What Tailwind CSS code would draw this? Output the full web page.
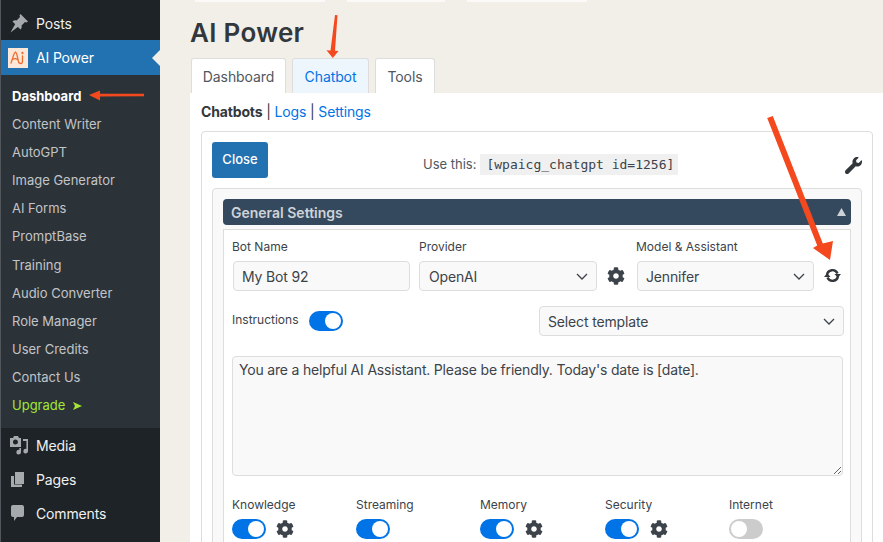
<!DOCTYPE html>
<html>
<head>
<meta charset="utf-8">
<script src="https://cdn.jsdelivr.net/npm/@tailwindcss/browser@4"></script>
</head>
<body class="m-0 overflow-hidden">
<div class="relative flex w-[883px] h-[542px] overflow-hidden bg-[#f1efe8] font-[Inter,sans-serif] text-[#3c434a]">

  <!-- Sidebar -->
  <aside class="w-[160px] h-full shrink-0 bg-[#1d2327] border-l border-[#50565b] text-[14px] tracking-[-0.15px] text-[#f0f0f1] pt-[6px]">
    <div class="flex items-center h-[34px] pl-[8px] gap-[7px]">
      <svg class="w-[20px] h-[20px]" viewBox="0 0 20 20" fill="#a7aaad"><path d="M11.500 1L19 8.500l-1.500 1-1.500-.5-3.500 3.500c.5 1.500 0 3-1 4L3.500 8.500c1-1 2.500-1.500 4-1L11 4l-.5-1.500z"/><path d="M6.500 10.500l3 3L1.500 19.500z"/></svg>
      <span>Posts</span>
    </div>
    <div class="relative flex items-center h-[35px] pl-[7px] gap-[8px] bg-[#2271b1] text-white">
      <div class="w-[20px] h-[20px] bg-[#fde7d9] flex items-center justify-center">
        <svg class="w-[16px] h-[15px]" viewBox="0 0 16 15" fill="none" stroke="#ee6a2c" stroke-width="1.300" stroke-linecap="round"><path d="M1 13C2.500 10 3.500 3 5.500 2 7.500 3 7.500 10 9 13"/><path d="M2.500 9.500C4 8.500 6 8.500 7.500 9.500"/><path d="M12.500 6v5.500c0 2-1.500 2.500-3 1.500"/><circle cx="12.500" cy="3" r=".5"/></svg>
      </div>
      <span>AI Power</span>
      <div class="absolute right-0 top-[10px] w-0 h-0 border-y-[8px] border-y-transparent border-r-[8px] border-r-[#f1efe8]"></div>
    </div>
    <nav class="h-[353px] bg-[#2c3338] pt-[7px] text-[13px] tracking-normal text-[#c3c4c7] pl-[11px] flex flex-col">
      <a class="h-[28.1px] leading-[28px] font-bold text-white">Dashboard</a>
      <a class="h-[28.1px] leading-[28px]">Content Writer</a>
      <a class="h-[28.1px] leading-[28px]">AutoGPT</a>
      <a class="h-[28.1px] leading-[28px]">Image Generator</a>
      <a class="h-[28.1px] leading-[28px]">AI Forms</a>
      <a class="h-[28.1px] leading-[29px]">PromptBase</a>
      <a class="h-[28.1px] leading-[29px]">Training</a>
      <a class="h-[28.1px] leading-[29px]">Audio Converter</a>
      <a class="h-[28.1px] leading-[29px]">Role Manager</a>
      <a class="h-[28.1px] leading-[29px]">User Credits</a>
      <a class="h-[28.1px] leading-[29px]">Contact Us</a>
      <a class="h-[28.1px] mt-[1px] text-[#a3e635] flex items-center gap-[8px]">Upgrade
        <svg class="w-[9px] h-[8px]" viewBox="0 0 9 8" fill="#a3e635"><path d="M0 0l9 4-9 4 2-4z"/></svg>
      </a>
    </nav>
    <div class="flex items-center h-[34px] pl-[8px] gap-[7px]">
      <svg class="w-[20px] h-[20px]" viewBox="0 0 20 20" fill="#a7aaad"><path fill-rule="evenodd" d="M1 3h3l1-2h4l1 2h2v9H1zm5.500 1.500a2.500 2.500 0 100 5 2.500 2.500 0 000-5z"/><path d="M14 4h5v12a2.300 2.300 0 11-1.600-2.100V6H14z"/><path d="M12 13v4a2.300 2.300 0 11-1.600-2.100V13z"/></svg>
      <span>Media</span>
    </div>
    <div class="flex items-center h-[34px] pl-[8px] gap-[7px]">
      <svg class="w-[20px] h-[20px]" viewBox="0 0 20 20" fill="#a7aaad"><path d="M6 3h9v12H6z"/><path d="M2 7h3v8.500h8V18H2z"/></svg>
      <span>Pages</span>
    </div>
    <div class="flex items-center h-[34px] pl-[8px] gap-[7px]">
      <svg class="w-[20px] h-[20px]" viewBox="0 0 20 20" fill="#a7aaad"><path d="M4 2h9a2 2 0 012 2v8a2 2 0 01-2 2H8l-3 4v-4H4a2 2 0 01-2-2V4a2 2 0 012-2z"/></svg>
      <span>Comments</span>
    </div>
  </aside>

  <!-- Main -->
  <main class="flex-1 min-w-0 pl-[30px]">
    <div class="flex h-[2px] pl-[5px] gap-[22px]">
      <div class="w-[130px] bg-white/70"></div>
      <div class="w-[98px] bg-white/70"></div>
      <div class="w-[120px] bg-white/70"></div>
    </div>
    <h1 class="mt-[15px] text-[26px] leading-[32px] tracking-[0.3px] font-semibold text-[#32373c]">AI Power</h1>

    <div class="flex items-end h-[35px] mt-[9px] pl-px gap-[6px] text-[14px] tracking-[-0.1px]">
      <div class="w-[95px] h-[35px] flex items-center justify-center bg-white border border-b-0 border-[#ddd] rounded-t-[3px] text-[#50575e]">Dashboard</div>
      <div class="w-[77px] h-[35px] flex items-center justify-center bg-[#eef6fd] border border-b-0 border-[#ddd] rounded-t-[3px] text-[#0073e6]">Chatbot</div>
      <div class="w-[60px] h-[35px] flex items-center justify-center bg-white border border-b-0 border-[#ddd] rounded-t-[3px] text-[#50575e]">Tools</div>
    </div>

    <section class="bg-white h-[460px] pl-[11px] pr-[10px] text-[13px]">
      <p class="h-[38px] pt-[10px] leading-[18px] text-[14px] tracking-[-0.15px] text-[#32373c]"><b class="font-bold">Chatbots</b> | <a class="text-[#0073e6]">Logs</a> | <a class="text-[#0073e6]">Settings</a></p>

      <div class="border border-[#ddd] rounded-[4px] p-[10px] h-[440px]">
        <div class="flex items-center h-[36px] relative">
          <button class="w-[56px] h-[36px] bg-[#2271b1] text-white rounded-[3px] text-[13px] font-medium">Close</button>
          <span class="ml-[155px] mt-[10px] text-[#50575e] text-[13px]">Use this:</span>
          <code class="ml-[4px] mt-[9px] h-[21px] w-[198px] px-[6px] bg-[#f0f0f0] leading-[21px] text-[13px] font-['DejaVu_Sans_Mono',monospace] text-[#3c434a] whitespace-nowrap overflow-hidden">[wpaicg_chatgpt id=1256]</code>
          <svg class="ml-auto mt-[11px] w-[17px] h-[17px]" viewBox="0 0 512 512" fill="#32373c"><path d="M507.730 109.100c-2.240-9.030-13.540-12.090-20.120-5.510l-74.360 74.360-67.880-11.310-11.310-67.880 74.360-74.360c6.620-6.620 3.430-17.900-5.660-20.160-47.380-11.740-99.550.91-136.580 37.930-39.640 39.640-50.550 97.100-34.050 147.200L18.740 402.760c-24.990 24.990-24.990 65.510 0 90.500 24.990 24.990 65.510 24.990 90.500 0l213.210-213.210c50.120 16.710 107.470 5.680 147.370-34.220 37.070-37.070 49.700-89.320 37.910-136.730z"/></svg>
        </div>

        <div class="mt-[10px] border border-[#ddd] rounded-[4px] bg-[#f9f9f9] p-[10px] h-[400px]">
          <div class="flex items-center justify-between h-[26px] pl-[8px] pr-[5px] bg-[#34495e] rounded-[4px] text-[14px] font-semibold text-[#ced3d8]">
            <span>General Settings</span>
            <svg class="w-[9px] h-[8px]" viewBox="0 0 9 8" fill="#ced3d8"><path d="M4.500 0L9 8H0z"/></svg>
          </div>
          <div class="mt-[4px] bg-white border border-[#ddd] h-[340px] pl-[8px] pr-[6px] text-[12px]">
            <div class="flex pt-[9px]">
              <div class="w-[187px]">
                <div class="h-[16px] leading-[16px]">Bot Name</div>
                <div class="mt-[6px] ml-px w-[177px] h-[30px] flex items-center pl-[8px] bg-[#f9f9f9] border border-[#ddd] rounded-[4px] text-[14px] tracking-[-0.15px]">My Bot 92</div>
              </div>
              <div class="w-[217px]">
                <div class="h-[16px] leading-[16px]">Provider</div>
                <div class="mt-[6px] flex items-center">
                  <div class="w-[178px] h-[30px] flex items-center justify-between pl-[9px] pr-[8px] bg-[#f9f9f9] border border-[#ddd] rounded-[4px] text-[14px] tracking-[-0.15px]">OpenAI
                    <svg class="w-[12px] h-[7px]" viewBox="0 0 12 7" fill="none" stroke="#3c434a" stroke-width="1.300"><path d="M1 1l5 5 5-5"/></svg>
                  </div>
                  <svg class="ml-[10px] w-[18px] h-[18px]" viewBox="0 0 512 512" fill="#3c434a"><path d="M487.400 315.700l-42.600-24.600c4.300-23.200 4.300-47 0-70.200l42.600-24.600c4.900-2.800 7.100-8.600 5.500-14-11.100-35.600-30-67.800-54.700-94.600-3.800-4.100-10-5.100-14.800-2.300L380.800 110c-17.900-15.400-38.500-27.300-60.800-35.100V25.800c0-5.600-3.900-10.500-9.400-11.700-36.700-8.200-74.300-7.800-109.200 0-5.500 1.200-9.400 6.100-9.400 11.700V75c-22.200 7.900-42.800 19.800-60.800 35.100L88.700 85.500c-4.900-2.800-11-1.900-14.800 2.300-24.700 26.700-43.600 58.900-54.700 94.600-1.700 5.400.6 11.200 5.500 14L67.300 221c-4.300 23.200-4.300 47 0 70.200l-42.600 24.600c-4.900 2.800-7.100 8.600-5.500 14 11.100 35.600 30 67.800 54.700 94.600 3.800 4.100 10 5.100 14.800 2.300l42.600-24.600c17.900 15.400 38.500 27.300 60.800 35.100v49.200c0 5.600 3.900 10.500 9.400 11.700 36.700 8.200 74.300 7.800 109.200 0 5.500-1.200 9.400-6.100 9.400-11.700v-49.200c22.200-7.900 42.800-19.800 60.800-35.100l42.600 24.600c4.900 2.800 11 1.900 14.800-2.300 24.700-26.700 43.600-58.900 54.700-94.600 1.500-5.500-.7-11.300-5.600-14.100zM256 336c-44.100 0-80-35.900-80-80s35.900-80 80-80 80 35.900 80 80-35.900 80-80 80z"/></svg>
                </div>
              </div>
              <div>
                <div class="h-[16px] leading-[16px]">Model &amp; Assistant</div>
                <div class="mt-[6px] flex items-center">
                  <div class="ml-px w-[177px] h-[30px] flex items-center justify-between pl-[8px] pr-[8px] bg-[#f9f9f9] border border-[#ddd] rounded-[4px] text-[14px] tracking-[-0.15px]">Jennifer
                    <svg class="w-[12px] h-[7px]" viewBox="0 0 12 7" fill="none" stroke="#3c434a" stroke-width="1.300"><path d="M1 1l5 5 5-5"/></svg>
                  </div>
                  <svg class="ml-[10px] mt-[-2px] w-[17px] h-[15px]" viewBox="0 0 17 15" fill="none" stroke="#32373c" stroke-width="2.400"><path d="M3 7A5.500 5.500 0 0 1 13.500 5.500"/><path d="M14 8A5.500 5.500 0 0 1 3.500 9.500"/><path d="M10.500 6h6.500l-3.200 3.800z" fill="#32373c" stroke="none"/><path d="M0 9h6.500L3.200 5.200z" fill="#32373c" stroke="none"/></svg>
                </div>
              </div>
            </div>

            <div class="flex items-center justify-between mt-[15px] h-[30px]">
              <div class="flex items-center gap-[10px]">
                <span class="mt-[-2px]">Instructions</span>
                <div class="flex justify-end items-center w-[34px] h-[20px] rounded-full bg-[#0073e6] pr-[2px]"><div class="w-[16px] h-[16px] rounded-full bg-white"></div></div>
              </div>
              <div class="w-[305px] h-[30px] flex items-center justify-between pl-[8px] pr-[8px] bg-[#f9f9f9] border border-[#ddd] rounded-[4px] text-[14px] tracking-[-0.15px]">Select template
                <svg class="w-[12px] h-[7px]" viewBox="0 0 12 7" fill="none" stroke="#3c434a" stroke-width="1.300"><path d="M1 1l5 5 5-5"/></svg>
              </div>
            </div>

            <textarea class="block mt-[20px] w-[611px] h-[120px] p-[6px] bg-[#f9f9f9] border border-[#ddd] rounded-[4px] text-[14px] tracking-[-0.19px] leading-[14px] text-[#3c434a]">You are a helpful AI Assistant. Please be friendly. Today's date is [date].</textarea>

            <div class="grid grid-cols-[124px_124px_125px_124px_1fr] mt-[21px]">
              <div>
                <div class="h-[16px] leading-[16px]">Knowledge</div>
                <div class="mt-[6px] flex items-center gap-[10px]">
                  <div class="flex justify-end items-center w-[34px] h-[20px] rounded-full bg-[#0073e6] pr-[2px]"><div class="w-[16px] h-[16px] rounded-full bg-white"></div></div>
                  <svg class="w-[18px] h-[18px]" viewBox="0 0 512 512" fill="#3c434a"><path d="M487.400 315.700l-42.600-24.600c4.300-23.200 4.300-47 0-70.200l42.600-24.600c4.900-2.800 7.100-8.600 5.500-14-11.100-35.600-30-67.800-54.700-94.600-3.800-4.100-10-5.100-14.800-2.300L380.800 110c-17.900-15.400-38.500-27.300-60.800-35.100V25.800c0-5.600-3.900-10.500-9.400-11.700-36.700-8.200-74.300-7.800-109.200 0-5.500 1.200-9.400 6.100-9.400 11.700V75c-22.200 7.900-42.800 19.800-60.800 35.100L88.700 85.500c-4.900-2.800-11-1.900-14.800 2.300-24.700 26.700-43.600 58.900-54.700 94.600-1.700 5.400.6 11.200 5.500 14L67.300 221c-4.300 23.200-4.300 47 0 70.200l-42.600 24.600c-4.900 2.800-7.100 8.600-5.500 14 11.100 35.600 30 67.800 54.700 94.600 3.800 4.100 10 5.100 14.800 2.300l42.600-24.600c17.900 15.400 38.500 27.300 60.800 35.100v49.200c0 5.600 3.900 10.500 9.400 11.700 36.700 8.200 74.300 7.800 109.200 0 5.500-1.200 9.400-6.100 9.400-11.700v-49.200c22.200-7.900 42.800-19.800 60.800-35.100l42.600 24.600c4.900 2.800 11 1.900 14.800-2.300 24.700-26.700 43.600-58.900 54.700-94.600 1.500-5.500-.7-11.300-5.600-14.100zM256 336c-44.100 0-80-35.900-80-80s35.900-80 80-80 80 35.900 80 80-35.900 80-80 80z"/></svg>
                </div>
              </div>
              <div>
                <div class="h-[16px] leading-[16px]">Streaming</div>
                <div class="mt-[6px] flex justify-end items-center w-[34px] h-[20px] rounded-full bg-[#0073e6] pr-[2px]"><div class="w-[16px] h-[16px] rounded-full bg-white"></div></div>
              </div>
              <div>
                <div class="h-[16px] leading-[16px]">Memory</div>
                <div class="mt-[6px] flex items-center gap-[11px]">
                  <div class="flex justify-end items-center w-[34px] h-[20px] rounded-full bg-[#0073e6] pr-[2px]"><div class="w-[16px] h-[16px] rounded-full bg-white"></div></div>
                  <svg class="w-[18px] h-[18px]" viewBox="0 0 512 512" fill="#3c434a"><path d="M487.400 315.700l-42.600-24.600c4.300-23.200 4.300-47 0-70.200l42.600-24.600c4.900-2.800 7.100-8.600 5.500-14-11.100-35.600-30-67.800-54.700-94.600-3.800-4.100-10-5.100-14.800-2.300L380.800 110c-17.900-15.400-38.500-27.300-60.800-35.100V25.800c0-5.600-3.900-10.500-9.400-11.700-36.700-8.200-74.300-7.800-109.200 0-5.500 1.200-9.400 6.100-9.400 11.700V75c-22.200 7.900-42.800 19.800-60.800 35.100L88.700 85.500c-4.900-2.800-11-1.900-14.800 2.300-24.700 26.700-43.600 58.900-54.700 94.600-1.700 5.400.6 11.200 5.500 14L67.300 221c-4.300 23.200-4.300 47 0 70.200l-42.600 24.600c-4.900 2.800-7.100 8.600-5.500 14 11.100 35.600 30 67.800 54.700 94.600 3.800 4.100 10 5.100 14.800 2.300l42.600-24.600c17.900 15.400 38.500 27.300 60.800 35.100v49.200c0 5.600 3.900 10.500 9.400 11.700 36.700 8.200 74.300 7.800 109.200 0 5.500-1.200 9.400-6.100 9.400-11.700v-49.200c22.200-7.900 42.800-19.800 60.800-35.100l42.600 24.600c4.900 2.800 11 1.900 14.800-2.300 24.700-26.700 43.600-58.900 54.700-94.600 1.500-5.500-.7-11.300-5.600-14.100zM256 336c-44.100 0-80-35.900-80-80s35.900-80 80-80 80 35.900 80 80-35.900 80-80 80z"/></svg>
                </div>
              </div>
              <div>
                <div class="h-[16px] leading-[16px]">Security</div>
                <div class="mt-[6px] flex items-center gap-[11px]">
                  <div class="flex justify-end items-center w-[34px] h-[20px] rounded-full bg-[#0073e6] pr-[2px]"><div class="w-[16px] h-[16px] rounded-full bg-white"></div></div>
                  <svg class="w-[18px] h-[18px]" viewBox="0 0 512 512" fill="#3c434a"><path d="M487.400 315.700l-42.600-24.600c4.300-23.200 4.300-47 0-70.200l42.600-24.600c4.900-2.800 7.100-8.600 5.500-14-11.100-35.600-30-67.800-54.700-94.600-3.800-4.100-10-5.100-14.800-2.300L380.800 110c-17.900-15.400-38.500-27.300-60.800-35.100V25.800c0-5.600-3.900-10.500-9.400-11.700-36.700-8.200-74.300-7.800-109.200 0-5.500 1.200-9.400 6.100-9.400 11.700V75c-22.200 7.900-42.800 19.800-60.800 35.100L88.700 85.500c-4.900-2.800-11-1.900-14.800 2.300-24.700 26.700-43.600 58.900-54.700 94.600-1.700 5.400.6 11.200 5.500 14L67.300 221c-4.300 23.200-4.300 47 0 70.200l-42.600 24.600c-4.900 2.800-7.100 8.600-5.500 14 11.100 35.600 30 67.800 54.700 94.600 3.800 4.100 10 5.100 14.800 2.300l42.600-24.600c17.900 15.400 38.500 27.300 60.800 35.100v49.200c0 5.600 3.900 10.500 9.400 11.700 36.700 8.200 74.300 7.800 109.200 0 5.500-1.200 9.400-6.100 9.400-11.700v-49.200c22.200-7.900 42.800-19.800 60.800-35.100l42.600 24.600c4.900 2.800 11 1.900 14.800-2.300 24.700-26.700 43.600-58.900 54.700-94.600 1.500-5.500-.7-11.300-5.600-14.100zM256 336c-44.100 0-80-35.900-80-80s35.900-80 80-80 80 35.900 80 80-35.900 80-80 80z"/></svg>
                </div>
              </div>
              <div>
                <div class="h-[16px] leading-[16px]">Internet</div>
                <div class="mt-[6px] flex items-center w-[34px] h-[20px] rounded-full bg-[#ccc] pl-[2px]"><div class="w-[16px] h-[16px] rounded-full bg-white"></div></div>
              </div>
            </div>
          </div>
        </div>
      </div>
    </section>
  </main>

  <!-- Annotation arrows -->
  <svg class="absolute inset-0 pointer-events-none" width="883" height="542" viewBox="0 0 883 542" fill="#f4491f" stroke="none">
    <path d="M144 93.800V96.300L100 96.500V100.500L89 95 100 90.500V93.800z"/>
    <path d="M335 15l2.500.2-2.500 35.500 3.500.3-5.700 7-6.300-7.800 4 .2z"/>
    <path d="M767.200 118.100L772.800 115.900 822.800 243.400 833 241 830 260 813 248 817.200 245.600z"/>
  </svg>
</div>
</body>
</html>
